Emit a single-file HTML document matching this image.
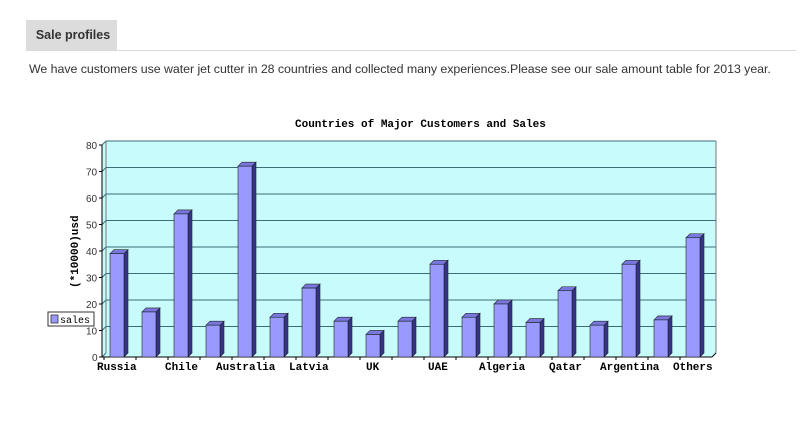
<!DOCTYPE html>
<html><head><meta charset="utf-8"><style>
body{margin:0;width:806px;height:429px;background:#fff;font-family:"Liberation Sans",Arial,sans-serif;overflow:hidden;position:relative}
.tab{position:absolute;left:26px;top:20px;width:91px;height:30px;background:#dcdcdc;font-weight:bold;font-size:12.5px;color:#333;line-height:31px;text-align:center;padding-left:3px;box-sizing:border-box}
.line{position:absolute;left:26px;top:50px;width:770px;height:1px;background:#d8d8d8}
.txt{position:absolute;left:29px;top:62px;font-size:12.4px;color:#333;white-space:nowrap;letter-spacing:-0.05px}
svg{position:absolute;left:0;top:0}
svg text{font-family:"Liberation Mono",monospace;font-weight:bold;font-size:11px;fill:#000}
</style></head><body>
<div class="tab">Sale profiles</div>
<div class="line"></div>
<div class="txt">We have customers use water jet cutter in 28 countries and collected many experiences.Please see our sale amount table for 2013 year.</div>
<svg width="806" height="429" id="s">
<text x="295" y="127">Countries of Major Customers and Sales</text>
<polygon points="106,141 716,141 716,353 712,357 102,357 102,145" fill="#c8fcfc"/>
<line x1="106" y1="141" x2="106" y2="353" stroke="#777" stroke-width="1"/>
<line x1="716" y1="141" x2="716" y2="353" stroke="#777" stroke-width="1"/>
<line x1="106" y1="141" x2="716" y2="141" stroke="#777"/>
<g id="g"></g>
<text x="0" y="0" transform="translate(78,288) rotate(-90)" font-size="11">(*10000)usd</text>
<rect x="48" y="312" width="46" height="14" fill="#fff" stroke="#333"/>
<rect x="51" y="315" width="7" height="8" fill="#9999ff" stroke="#333" stroke-width="0.8"/>
<text x="60" y="323" style="font-weight:normal;font-size:10px">sales</text>
</svg>
<script>
var g=document.getElementById('g'),h='';
function y(v){return 353-26.5*v/10;}
for(var i=0;i<=8;i++){var yy=y(i*10);
 if(i>0)h+='<line x1="106" y1="'+yy+'" x2="716" y2="'+yy+'" stroke="#3c6e78"/>';
 h+='<line x1="102" y1="'+(yy+4)+'" x2="106" y2="'+yy+'" stroke="#3c6e78"/>';
 h+='<line x1="99" y1="'+(yy+4)+'" x2="102" y2="'+(yy+4)+'" stroke="#000"/>';
 h+='<text x="'+(i==0?92:86)+'" y="'+(yy+8)+'" style="font-family:Liberation Sans,sans-serif;font-weight:normal;font-size:10px;fill:#333">'+(i*10)+'</text>';}
h+='<line x1="102" y1="145" x2="102" y2="357" stroke="#000"/><line x1="102" y1="357" x2="712" y2="357" stroke="#000"/><line x1="712" y1="357" x2="716" y2="353" stroke="#000"/>';
var v=[39,17,54,12,72,15,26,13.5,8.5,13.5,35,15,20,13,25,12,35,14,45];
for(var i=0;i<v.length;i++){var x=110+32*i,t=y(v[i])+4,b=357;
 h+='<line x1="'+(x-6)+'" y1="357" x2="'+(x-6)+'" y2="360" stroke="#000"/>';
 h+='<polygon points="'+(x+14)+','+t+' '+(x+18)+','+(t-4)+' '+(x+18)+','+(b-4)+' '+(x+14)+','+b+'" fill="#333388" stroke="#222" stroke-width="0.6"/>';
 h+='<polygon points="'+x+','+t+' '+(x+4)+','+(t-4)+' '+(x+18)+','+(t-4)+' '+(x+14)+','+t+'" fill="#7777dd" stroke="#222" stroke-width="0.6"/>';
 h+='<rect x="'+x+'" y="'+t+'" width="14" height="'+(b-t)+'" fill="#9999ff" stroke="#222" stroke-width="0.6"/>';}
var L=[["Russia",97],["Chile",165],["Australia",216],["Latvia",289],["UK",366],["UAE",428],["Algeria",479],["Qatar",549],["Argentina",600],["Others",673]];
L.forEach(function(l){h+='<text x="'+l[1]+'" y="370">'+l[0]+'</text>';});
g.innerHTML=h;
</script>
</body></html>
